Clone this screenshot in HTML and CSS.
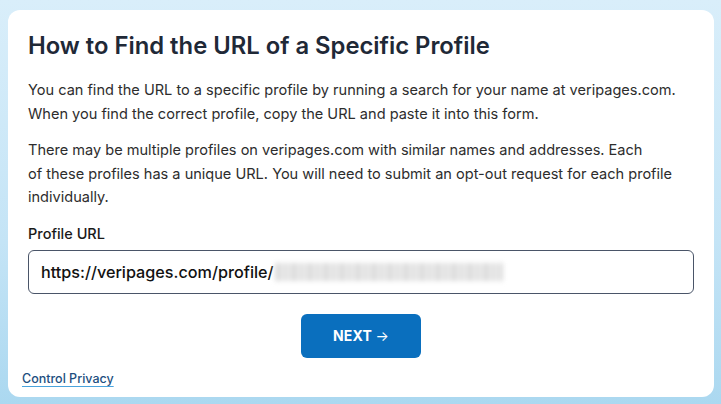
FILE: index.html
```html
<!DOCTYPE html>
<html>
<head>
<meta charset="utf-8">
<link rel="stylesheet" href="styles.css">
</head>
<body>
<div class="card">
  <h1 class="title">How to Find the URL of a Specific Profile</h1>
  <p class="text">You can find the URL to a specific profile by running a search for your name at veripages.com.<br>When you find the correct profile, copy the URL and paste it into this form.</p>
  <p class="text">There may be multiple profiles on veripages.com with similar names and addresses. Each<br>of these profiles has a unique URL. You will need to submit an opt-out request for each profile<br>individually.</p>
  <label class="label">Profile URL</label>
  <div class="input"><span class="url">https://veripages.com/profile/</span><span class="blur"></span></div>
  <div class="actions"><button class="btn">NEXT <span class="arrow">&#8594;</span></button></div>
  <a class="link" href="#">Control Privacy</a>
</div>
</body>
</html>
```
FILE: styles.css
```css
html, body { margin: 0; padding: 0; }
body {
  width: 721px; height: 404px;
  background: linear-gradient(180deg, #d9eefa 0%, #c4e4f6 60%, #abd8f0 100%);
  font-family: Inter, "Noto Sans", sans-serif;
  padding: 10px 7px 7px 8px;
  box-sizing: border-box;
}
.card {
  background: #fff;
  border-radius: 12px;
  height: 387px;
  box-sizing: border-box;
  padding: 21px 20px 0 20px;
  display: flex; flex-direction: column;
}
.title {
  margin: 0;
  font-size: 23.8px; line-height: 30px; font-weight: 600;
  color: #1f2937;
}
.text {
  margin: 18px 0 0 0;
  font-size: 14.55px; line-height: 23.5px;
  color: #2d2d2d;
  white-space: nowrap;
}
.text + .text { margin-top: 13px; }
.label {
  margin-top: 14px;
  font-size: 14.5px; line-height: 20px; font-weight: 500;
  color: #1a1a1a;
}
.input {
  margin-top: 6px;
  height: 44px; box-sizing: border-box;
  border: 1px solid #4a5568; border-radius: 6px;
  display: flex; align-items: center;
  padding-left: 12px;
}
.url { font-size: 16.2px; color: #111; font-weight: 500; }
.blur {
  width: 228px; height: 18px; margin-left: 1px;
  background: repeating-linear-gradient(90deg, #dcdcdc 0 6px, #ececec 6px 9px, #e2e2e2 9px 14px, #f2f2f2 14px 16px);
  filter: blur(2.5px);
}
.actions { display: flex; justify-content: center; margin-top: 20px; }
.btn {
  width: 120px; height: 44px;
  background: #0a6fbe; color: #fff;
  border: none; border-radius: 6px;
  font-family: Inter, sans-serif; font-size: 14px; font-weight: 700;
  letter-spacing: 0.2px;
}
.arrow { font-weight: 400; font-size: 14px; }
.link {
  align-self: flex-start;
  margin-top: 13px; margin-left: -6px;
  font-size: 12.5px; font-weight: 500;
  color: #1d4f80;
  text-decoration: underline; text-decoration-color: #4aa3dc;
  text-underline-offset: 3px;
}
```
